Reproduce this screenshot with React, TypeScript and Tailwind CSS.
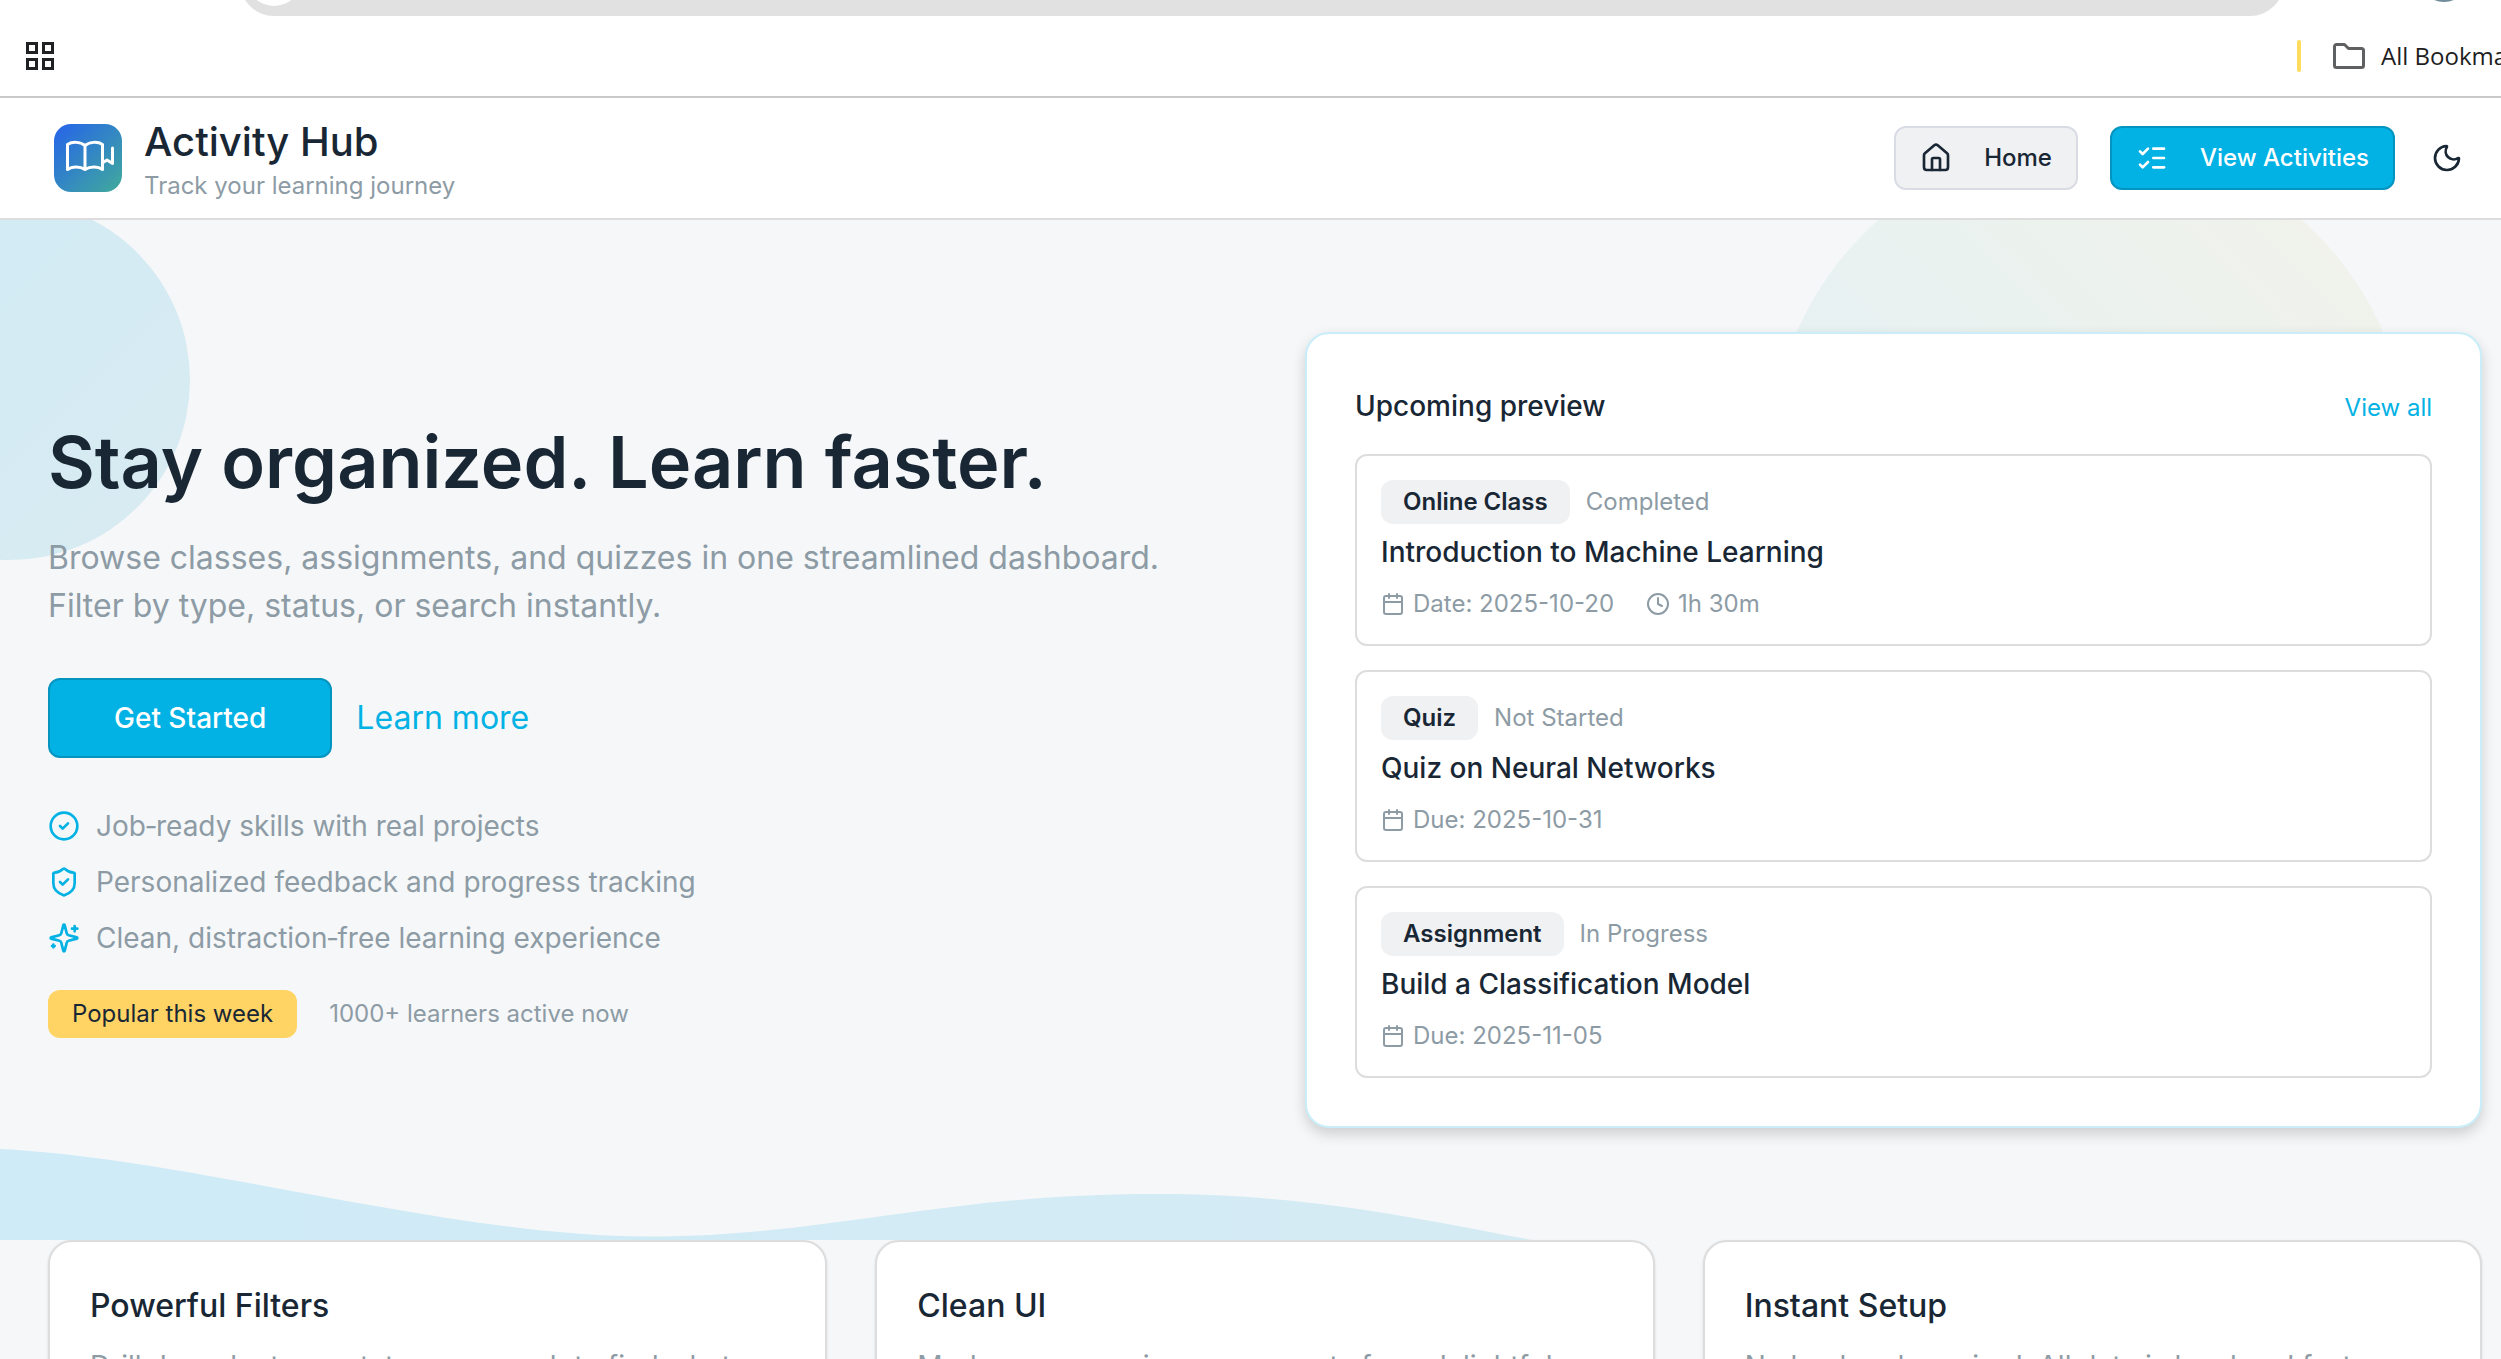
import React from "react";
import {
  Calendar,
  CircleCheck,
  Clock,
  House,
  ListChecks,
  Moon,
  ShieldCheck,
} from "lucide-react";

function SparklesIcon({ size, className }: { size: number; className?: string }) {
  return (
    <svg
      width={size}
      height={size}
      className={className}
      viewBox="0 0 24 24"
      fill="none"
      stroke="currentColor"
      strokeWidth="2"
      strokeLinecap="round"
      strokeLinejoin="round"
      aria-hidden="true"
    >
      <path d="M9.937 15.5A2 2 0 0 0 8.5 14.063l-6.135-1.582a.5.5 0 0 1 0-.962L8.5 9.936A2 2 0 0 0 9.937 8.5l1.582-6.135a.5.5 0 0 1 .963 0L14.063 8.5A2 2 0 0 0 15.5 9.937l6.135 1.581a.5.5 0 0 1 0 .964L15.5 14.063a2 2 0 0 0-1.437 1.437l-1.582 6.135a.5.5 0 0 1-.963 0z" />
      <path d="M20 3v4M22 5h-4M4 17v2M5 18H3" />
    </svg>
  );
}

const activities = [
  { type: "Online Class", status: "Completed", title: "Introduction to Machine Learning", date: "Date: 2025-10-20", duration: "1h 30m" },
  { type: "Quiz", status: "Not Started", title: "Quiz on Neural Networks", date: "Due: 2025-10-31" },
  { type: "Assignment", status: "In Progress", title: "Build a Classification Model", date: "Due: 2025-11-05" },
];

const benefits = [
  { icon: CircleCheck, text: "Job‑ready skills with real projects" },
  { icon: ShieldCheck, text: "Personalized feedback and progress tracking" },
  { icon: SparklesIcon, text: "Clean, distraction‑free learning experience" },
];

const features = [
  { title: "Powerful Filters", text: "Drill down by type, status, or search to find what matters." },
  { title: "Clean UI", text: "Modern, responsive components for a delightful experience." },
  { title: "Instant Setup", text: "No backend required. All data is local and fast." },
];

function BrowserBar() {
  return (
    <div className="relative flex h-[98px] items-start justify-between overflow-hidden border-b-2 border-[#c9c9c9] bg-white">
      <div className="absolute -top-[52px] right-[217px] left-60 h-[68px] rounded-full bg-[#e1e1e1]">
        <div className="mt-[2px] ml-[6px] size-14 rounded-full bg-white" />
      </div>
      <div className="absolute -top-[50px] right-[31px] size-[52px] rounded-full bg-[#708c9c]" />
      <button aria-label="Tab groups" className="mt-[42px] ml-[26px]">
        <svg width="28" height="28" viewBox="0 0 28 28" fill="none" stroke="#202124" strokeWidth="3">
          <path d="M1.5 1.5h9v9h-9zM17.5 1.5h9v9h-9zM1.5 17.5h9v9h-9zM17.5 17.5h9v9h-9z" />
        </svg>
      </button>
      <div className="-mr-10 mt-10 flex h-8 items-center">
        <span className="mr-8 h-8 w-1 rounded-full bg-[#ffdc5c]" />
        <button className="flex items-center gap-4 whitespace-nowrap font-['Open_Sans',sans-serif] text-2xl leading-8 text-[#1f1f1f]">
          <svg width="32" height="26" viewBox="0 0 32 26" fill="none" stroke="#5f6062" strokeWidth="3" strokeLinejoin="round">
            <path d="M1.5 3.5a2 2 0 0 1 2-2h8l4 4h13a2 2 0 0 1 2 2v15a2 2 0 0 1-2 2h-25a2 2 0 0 1-2-2z" />
          </svg>
          All Bookmarks
        </button>
      </div>
    </div>
  );
}

function Logo() {
  return (
    <svg className="size-[68px]" viewBox="0 0 68 68" fill="none" aria-hidden="true">
      <defs>
        <linearGradient id="logo" x1="0" y1="0" x2="1" y2="1">
          <stop stopColor="#2563eb" />
          <stop offset="1" stopColor="#41ab9b" />
        </linearGradient>
      </defs>
      <rect width="68" height="68" rx="17" fill="url(#logo)" />
      <g stroke="#fff" strokeWidth="3" strokeLinecap="round" strokeLinejoin="round">
        <path d="M31 21.500C26 17.500 18 17.500 13.500 20.500V45.500C18 42 26 42 31 45.500C36 42 44 42 48.500 45.500V20.500C44 17.500 36 17.500 31 21.500V45.500" />
        <path d="M49 38.500L53 36L58.500 39.500V24" />
      </g>
    </svg>
  );
}

function Header() {
  return (
    <header className="flex h-[122px] items-center justify-between border-b-2 border-[#dddddd] bg-white pr-[38px] pl-[54px]">
      <div className="flex items-center gap-[22px]">
        <Logo />
        <div className="pt-2">
          <div className="text-[40px] leading-12 font-medium">Activity Hub</div>
          <div className="text-2xl leading-10 text-[#8d9ba5]">Track your learning journey</div>
        </div>
      </div>
      <nav className="flex items-center gap-8 text-2xl font-medium">
        <button className="flex h-16 items-center gap-8 rounded-xl border-2 border-[#d9dce4] bg-[#f0f1f3] px-6">
          <House size={32} />
          Home
        </button>
        <button className="flex h-16 items-center gap-8 rounded-xl border-2 border-[#0494c0] bg-[#02b2e4] px-6 text-white">
          <ListChecks size={32} />
          View Activities
        </button>
        <button aria-label="Toggle theme" className="ml-1">
          <Moon size={32} />
        </button>
      </nav>
    </header>
  );
}

function Preview() {
  return (
    <section className="rounded-3xl border-2 border-[#c9eef9] bg-white p-12 shadow-[0_6px_14px_rgba(0,0,0,0.17)]">
      <div className="mb-6 flex h-12 items-baseline justify-between">
        <h2 className="text-[28px] leading-12 font-medium">Upcoming preview</h2>
        <a href="#all" className="text-2xl leading-8 text-[#02b2e4]">View all</a>
      </div>
      <ul className="flex flex-col gap-6">
        {activities.map((a) => (
          <li key={a.title} className="rounded-xl border-2 border-[#dddddd] p-6">
            <div className="flex items-center gap-4 text-2xl">
              <span className="rounded-xl bg-[#f0f1f3] px-[22px] leading-11 font-semibold">{a.type}</span>
              <span className="text-[#8d9ba5]">{a.status}</span>
            </div>
            <h3 className="mt-2 text-[28px] leading-10 font-medium">{a.title}</h3>
            <div className="mt-4 flex items-center gap-8 text-2xl leading-8 text-[#8d9ba5]">
              <span className="flex items-center gap-2">
                <Calendar size={24} strokeWidth={2} />
                {a.date}
              </span>
              {a.duration && (
                <span className="flex items-center gap-2">
                  <Clock size={24} strokeWidth={2} />
                  {a.duration}
                </span>
              )}
            </div>
          </li>
        ))}
      </ul>
    </section>
  );
}

function Hero() {
  return (
    <section className="relative overflow-hidden pt-28 pr-[19px] pb-28 pl-12">
      <div className="absolute -top-5 -left-[170px] size-[360px] rounded-full bg-linear-135 from-[#d0ebf6] to-[#d9ebf1]" />
      <div className="absolute -top-20 right-[91px] size-[640px] rounded-full bg-linear-45 from-[#e2eff8] via-[#e9f2f0] to-[#f3f2e9]" />
      <svg className="absolute bottom-0 left-0 h-[92px] w-full" viewBox="0 0 2501 92" preserveAspectRatio="none" aria-hidden="true">
        <defs>
          <linearGradient id="wave" x1="0" y1="0" x2="1" y2="0">
            <stop stopColor="#ceebf7" />
            <stop offset="1" stopColor="#d5ebf4" />
          </linearGradient>
        </defs>
        <path fill="url(#wave)" d="M0 1C190 10 450 89 650 88.500C830 88 940 46 1156 46C1300 46 1400 67 1532 92H0Z" />
      </svg>
      <div className="relative grid grid-cols-2 items-center gap-20">
        <div>
          <h1 className="text-[72px] leading-20 font-semibold">Stay organized. Learn faster.</h1>
          <p className="mt-8 text-[32px] leading-12 text-[#8d9ba5]">
            Browse classes, assignments, and quizzes in one streamlined dashboard.
            <br />
            Filter by type, status, or search instantly.
          </p>
          <div className="mt-12 flex items-center gap-6">
            <button className="h-20 rounded-xl border-2 border-[#0494c0] bg-[#02b2e4] px-16 text-[28px] font-medium text-white">Get Started</button>
            <a href="#learn" className="text-[32px] text-[#02b2e4]">Learn more</a>
          </div>
          <ul className="mt-12 flex flex-col gap-4 text-[28px] leading-10 text-[#8d9ba5]">
            {benefits.map(({ icon: Icon, text }) => (
              <li key={text} className="flex items-center gap-4">
                <Icon size={32} className="text-[#02b2e4]" />
                {text}
              </li>
            ))}
          </ul>
          <div className="mt-8 flex items-center gap-8 text-2xl">
            <span className="rounded-xl bg-[#ffd464] px-6 leading-12">Popular this week</span>
            <span className="text-[#8d9ba5]">1000+ learners active now</span>
          </div>
        </div>
        <Preview />
      </div>
    </section>
  );
}

export default function App() {
  return (
    <div className="h-screen overflow-hidden bg-[#f5f7f9] font-['Inter',sans-serif] text-[#192735]">
      <BrowserBar />
      <Header />
      <main>
        <Hero />
        <section className="grid grid-cols-3 gap-12 pr-[19px] pl-12">
          {features.map((f) => (
            <article key={f.title} className="rounded-3xl border-2 border-[#dddddd] bg-white p-10 shadow-sm">
              <h2 className="text-[32px] leading-12 font-medium">{f.title}</h2>
              <p className="mt-4 text-[28px] leading-10 text-[#8d9ba5]">{f.text}</p>
            </article>
          ))}
        </section>
      </main>
    </div>
  );
}
